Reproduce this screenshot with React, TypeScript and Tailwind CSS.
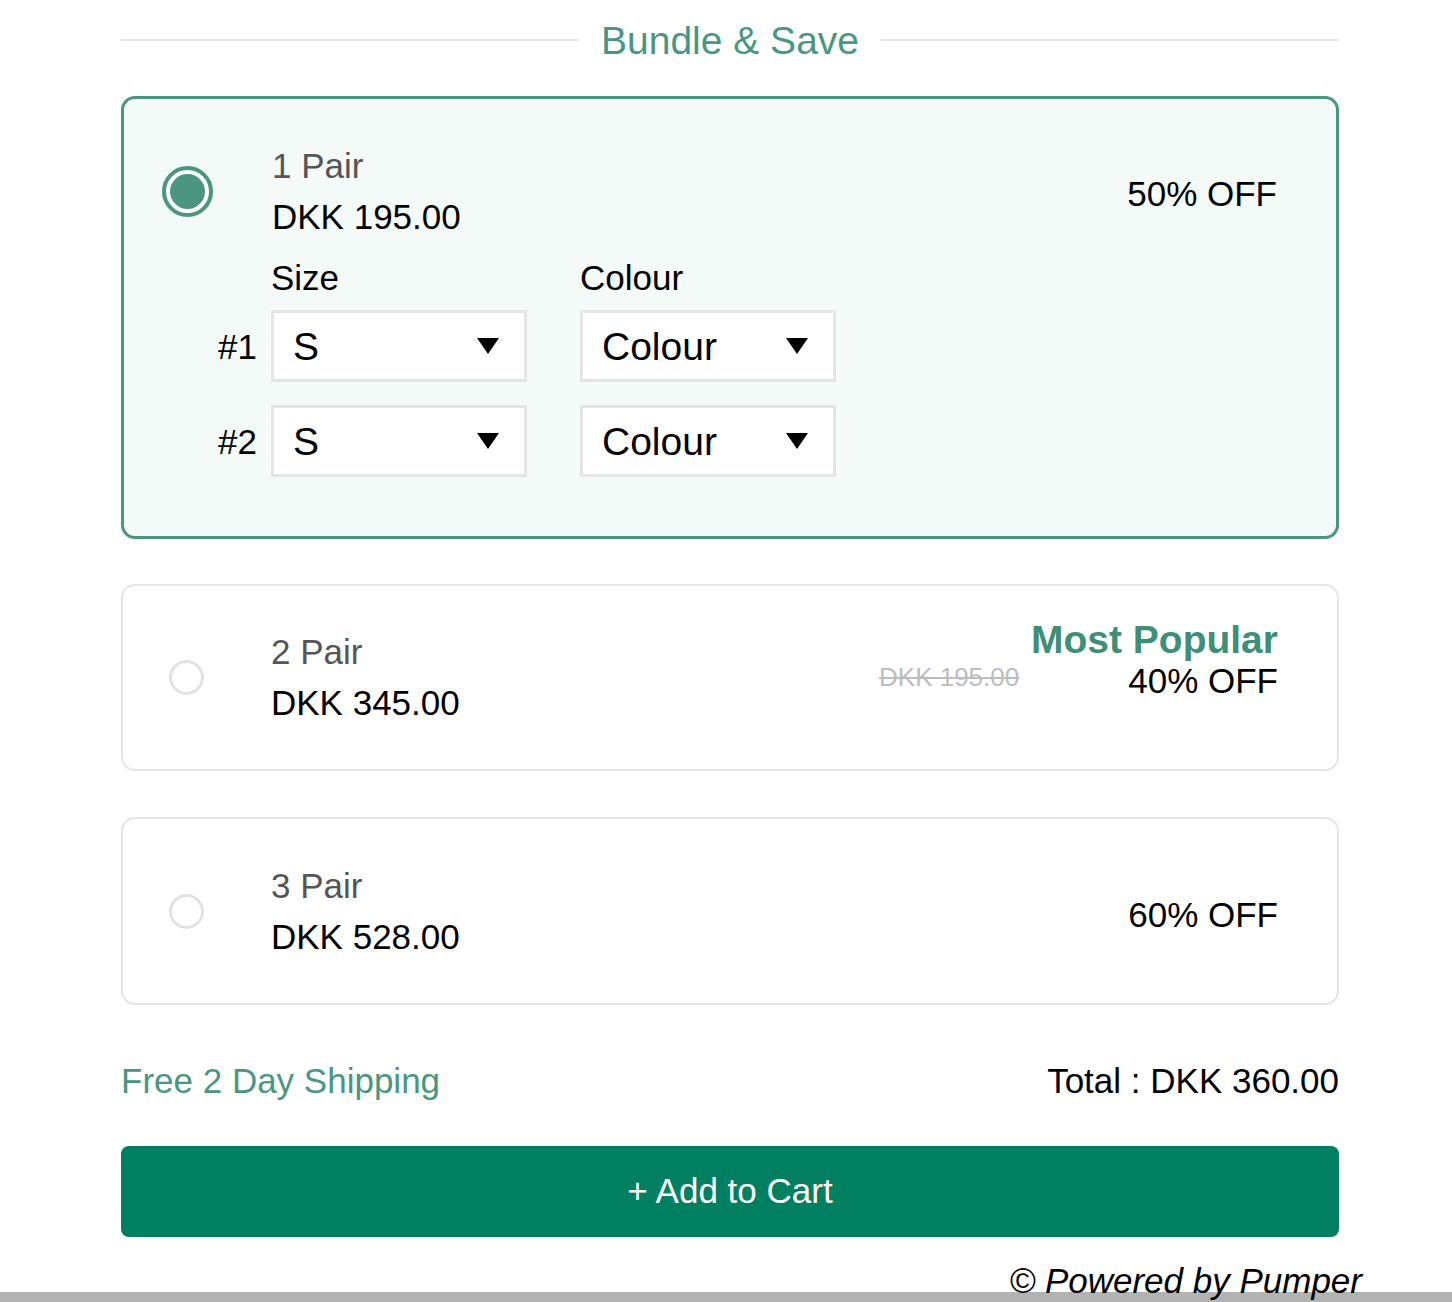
import React from "react"

const font = { fontFamily: '"Liberation Sans", Arial, sans-serif' }

const Caret = () => (
  <svg width="22" height="16" viewBox="0 0 22 16" className="shrink-0">
    <path d="M0 0 H22 L11 16 Z" fill="#000" />
  </svg>
)

const Select = ({ value }: { value: string }) => (
  <div className="flex h-[72px] w-[256px] items-center justify-between border-[3px] border-[#e5e5e5] bg-white pl-[19px] pr-[25px]">
    <span className="text-[39px] leading-none text-black">{value}</span>
    <Caret />
  </div>
)

const Radio = ({ checked }: { checked?: boolean }) => (
  <div className="flex w-[51px] shrink-0 justify-center">
    {checked ? (
      <div className="h-[51px] w-[51px] rounded-full border-[4px] border-[#4a9680] bg-white p-[4px]">
        <div className="h-full w-full rounded-full bg-[#4a9680]" />
      </div>
    ) : (
      <div className="h-[35px] w-[35px] rounded-full border-[3px] border-[#e2e2e2] bg-white" />
    )}
  </div>
)

const PairText = ({ label, price }: { label: string; price: string }) => (
  <div className="ml-[59px] flex flex-col text-[35px] leading-[51px]">
    <span className="text-[#555555]">{label}</span>
    <span className="text-black">{price}</span>
  </div>
)

export default function App() {
  return (
    <div className="relative h-[1302px] w-full overflow-hidden bg-white" style={font}>
      <div className="ml-[121px] flex w-[1218px] flex-col">
        {/* heading */}
        <div className="flex h-[80px] items-center gap-[22px]">
          <div className="h-[2px] flex-1 bg-[#e5e5e5]" />
          <h2 className="text-[39px] leading-none text-[#4a9680]">Bundle &amp; Save</h2>
          <div className="h-[2px] flex-1 bg-[#e5e5e5]" />
        </div>

        {/* 1 pair - selected */}
        <div className="mt-[16px] rounded-[14px] border-[3px] border-[#4a9680] bg-[#f4faf8] pb-[59px] pt-[41px]">
          <div className="flex items-center pl-[38px] pr-[59px]">
            <Radio checked />
            <PairText label="1 Pair" price="DKK 195.00" />
            <div className="ml-auto pt-[4px] text-[35px] leading-[51px] text-black">50% OFF</div>
          </div>
          <div className="ml-[94px] flex flex-col text-[35px] text-black">
            <div className="mt-[10px] flex pl-[53px] leading-[51px]">
              <span className="w-[256px]">Size</span>
              <span className="ml-[53px]">Colour</span>
            </div>
            <div className="mt-[7px] flex items-center">
              <span className="w-[53px] leading-none">#1</span>
              <Select value="S" />
              <div className="ml-[53px]">
                <Select value="Colour" />
              </div>
            </div>
            <div className="mt-[23px] flex items-center">
              <span className="w-[53px] leading-none">#2</span>
              <Select value="S" />
              <div className="ml-[53px]">
                <Select value="Colour" />
              </div>
            </div>
          </div>
        </div>

        {/* 2 pair */}
        <div className="mt-[45px] rounded-[14px] border-2 border-[#e5e5e5] bg-white pb-[41px] pt-[40px]">
          <div className="flex items-center pl-[38px] pr-[59px]">
            <Radio />
            <PairText label="2 Pair" price="DKK 345.00" />
            <div className="ml-auto flex items-center">
              <span className="text-[26px] leading-none text-[#bdbdbd] line-through">DKK 195.00</span>
              <div className="relative ml-[109px] pt-[6px]">
                <span className="absolute bottom-[47px] right-0 whitespace-nowrap text-[39px] font-bold leading-[39px] text-[#3f8f78]">
                  Most Popular
                </span>
                <span className="text-[35px] leading-[51px] text-black">40% OFF</span>
              </div>
            </div>
          </div>
        </div>

        {/* 3 pair */}
        <div className="mt-[46px] rounded-[14px] border-2 border-[#e5e5e5] bg-white pb-[41px] pt-[41px]">
          <div className="flex items-center pl-[38px] pr-[59px]">
            <Radio />
            <PairText label="3 Pair" price="DKK 528.00" />
            <div className="ml-auto pt-[6px] text-[35px] leading-[51px] text-black">60% OFF</div>
          </div>
        </div>

        {/* footer */}
        <div className="mt-[50px] flex items-center justify-between text-[35px] leading-[51px]">
          <span className="text-[#4a9680]">Free 2 Day Shipping</span>
          <span className="text-black">Total : DKK 360.00</span>
        </div>

        <button className="mt-[40px] flex h-[91px] w-full items-center justify-center rounded-[8px] bg-[#008060] text-[35px] text-white">
          + Add to Cart
        </button>

        <div className="relative z-10 mr-[-23px] mt-[18px] flex justify-end">
          <span className="text-[35px] italic leading-[51px] text-black">© Powered by Pumper</span>
        </div>
      </div>
      <div className="absolute inset-x-0 bottom-0 h-[10px] bg-[#b3b3b3]" />
    </div>
  )
}
